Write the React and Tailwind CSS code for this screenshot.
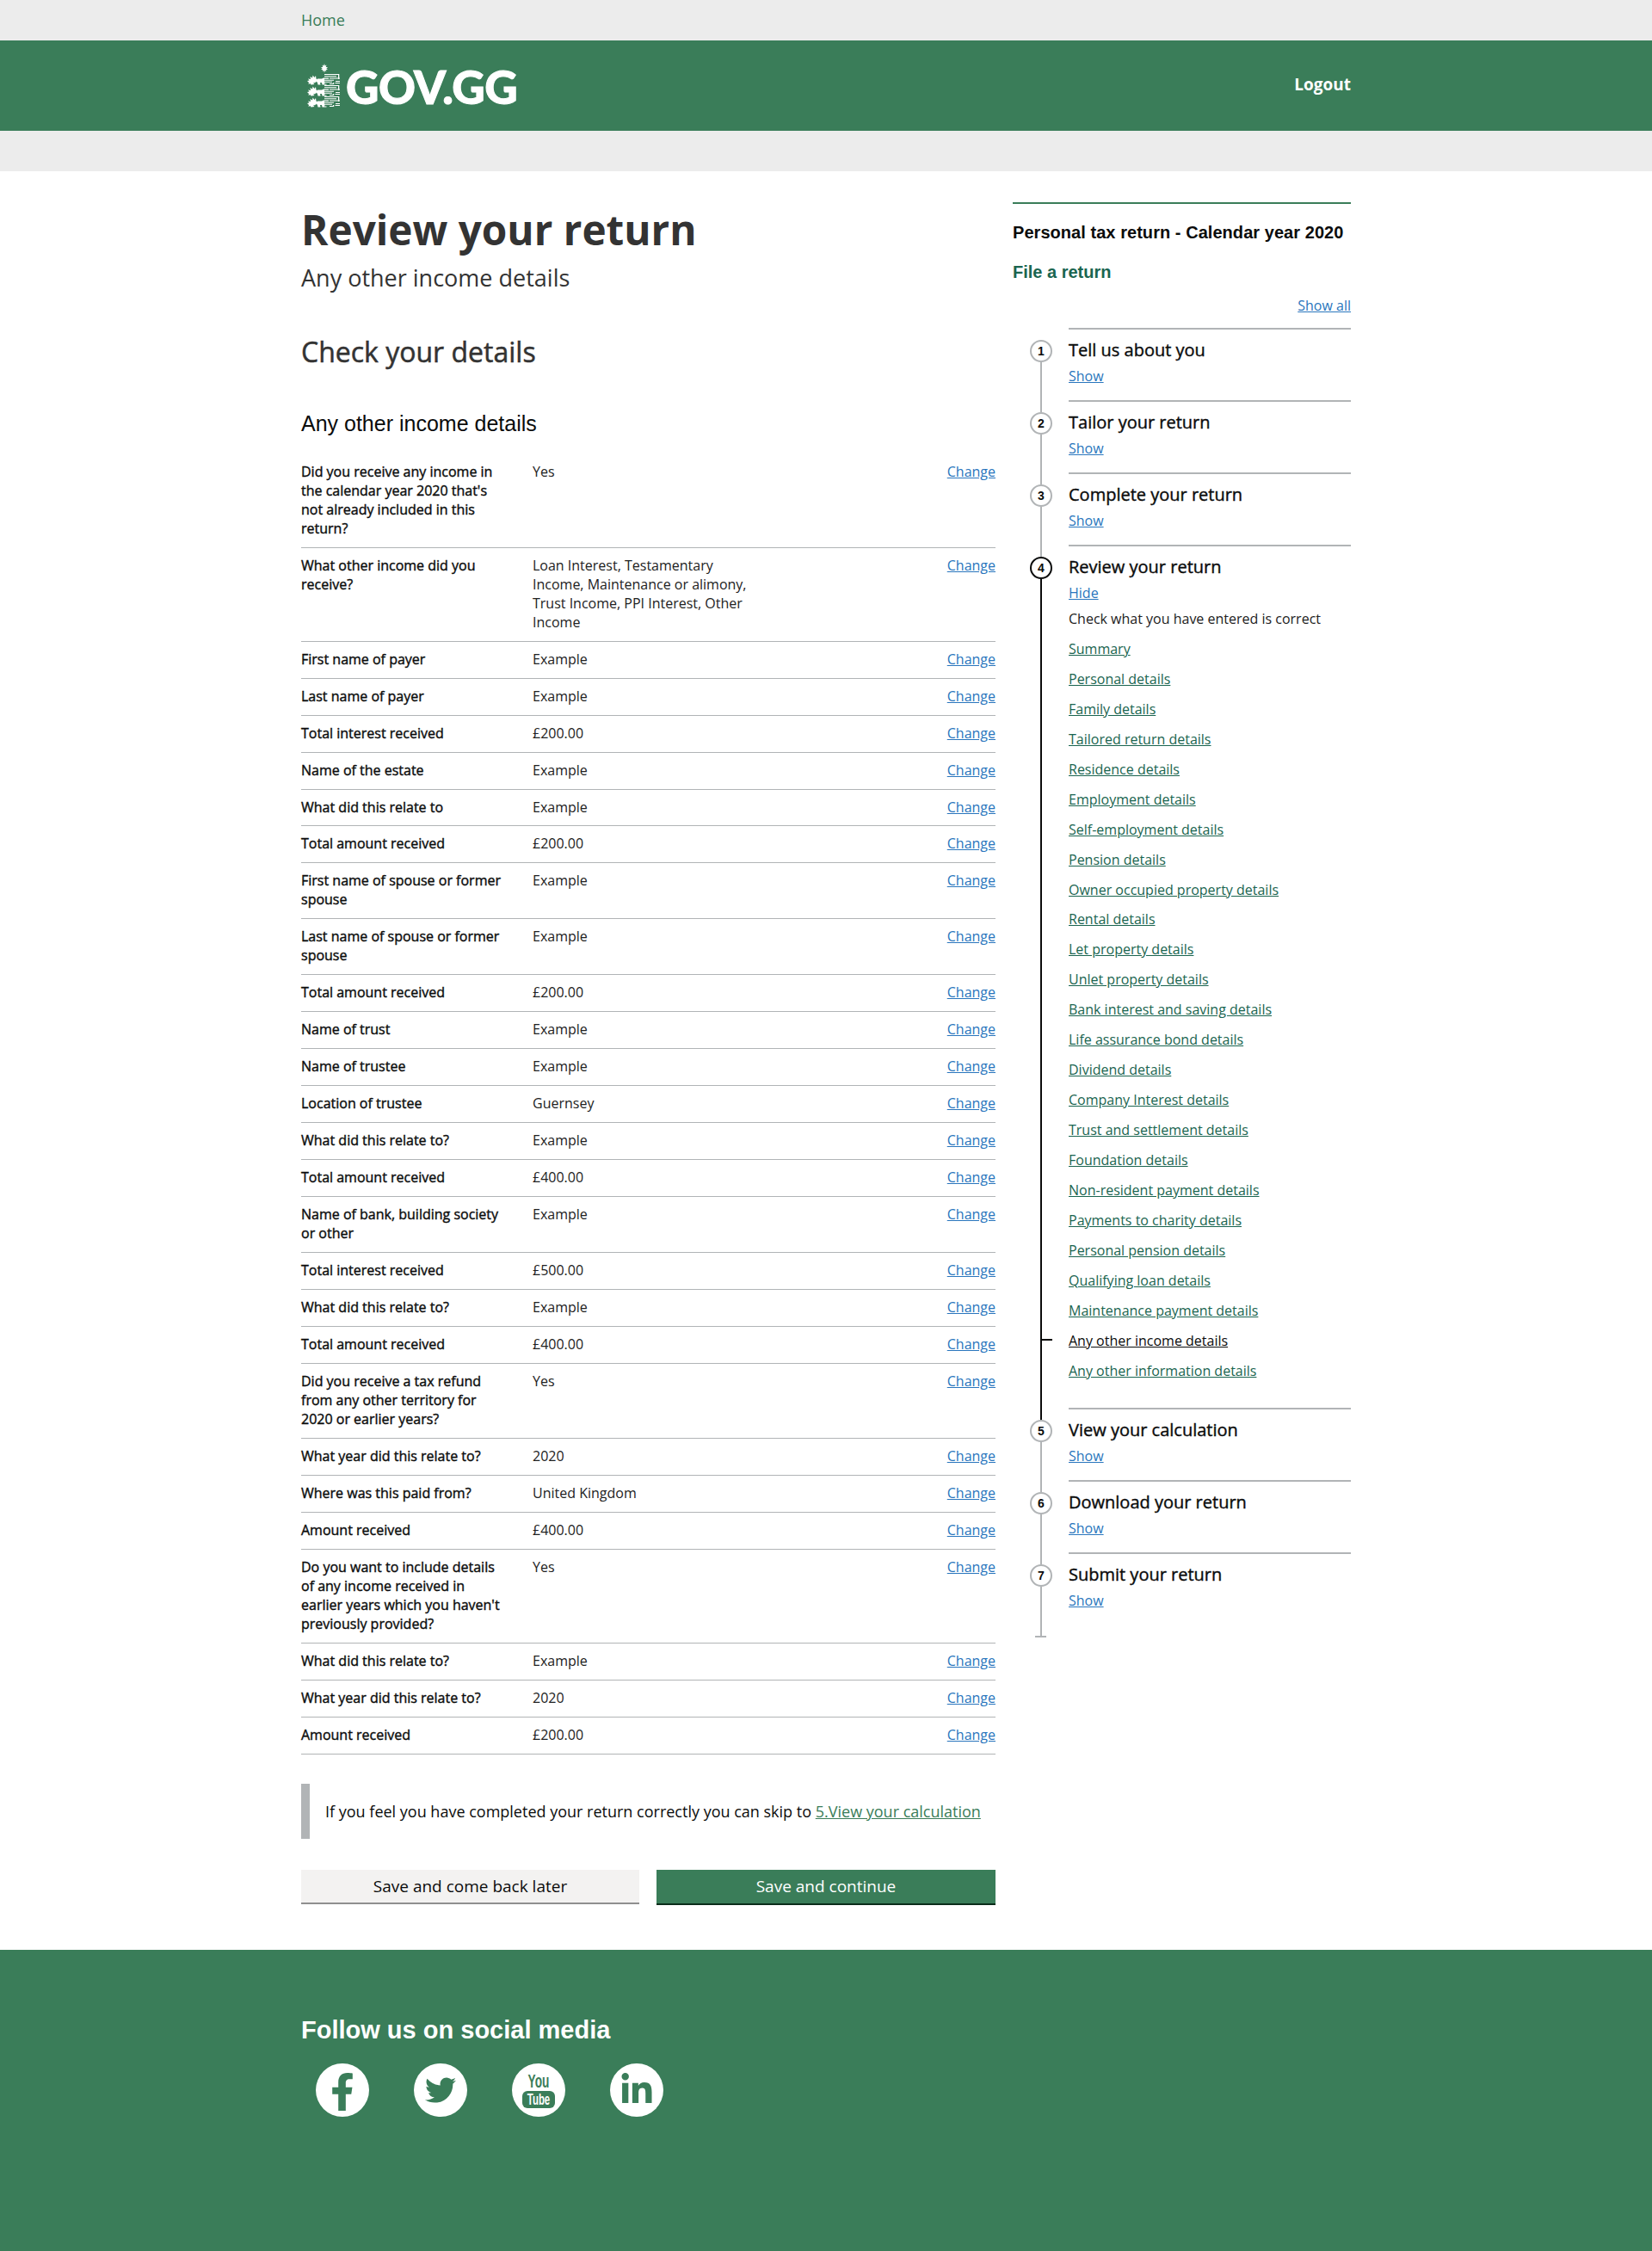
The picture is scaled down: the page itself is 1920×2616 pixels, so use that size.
import React from "react";
import { FaFacebookF, FaTwitter, FaLinkedinIn } from "react-icons/fa";

const rows = [
  ["Did you receive any income in the calendar year 2020 that's not already included in this return?", "Yes"],
  ["What other income did you receive?", "Loan Interest, Testamentary Income, Maintenance or alimony, Trust Income, PPI Interest, Other Income"],
  ["First name of payer", "Example"],
  ["Last name of payer", "Example"],
  ["Total interest received", "£200.00"],
  ["Name of the estate", "Example"],
  ["What did this relate to", "Example"],
  ["Total amount received", "£200.00"],
  ["First name of spouse or former spouse", "Example"],
  ["Last name of spouse or former spouse", "Example"],
  ["Total amount received", "£200.00"],
  ["Name of trust", "Example"],
  ["Name of trustee", "Example"],
  ["Location of trustee", "Guernsey"],
  ["What did this relate to?", "Example"],
  ["Total amount received", "£400.00"],
  ["Name of bank, building society or other", "Example"],
  ["Total interest received", "£500.00"],
  ["What did this relate to?", "Example"],
  ["Total amount received", "£400.00"],
  ["Did you receive a tax refund from any other territory for 2020 or earlier years?", "Yes"],
  ["What year did this relate to?", "2020"],
  ["Where was this paid from?", "United Kingdom"],
  ["Amount received", "£400.00"],
  ["Do you want to include details of any income received in earlier years which you haven't previously provided?", "Yes"],
  ["What did this relate to?", "Example"],
  ["What year did this relate to?", "2020"],
  ["Amount received", "£200.00"],
];

const reviewLinks = [
  "Summary",
  "Personal details",
  "Family details",
  "Tailored return details",
  "Residence details",
  "Employment details",
  "Self-employment details",
  "Pension details",
  "Owner occupied property details",
  "Rental details",
  "Let property details",
  "Unlet property details",
  "Bank interest and saving details",
  "Life assurance bond details",
  "Dividend details",
  "Company Interest details",
  "Trust and settlement details",
  "Foundation details",
  "Non-resident payment details",
  "Payments to charity details",
  "Personal pension details",
  "Qualifying loan details",
  "Maintenance payment details",
  "Any other income details",
  "Any other information details",
];

const Lion = ({ y }) => (
  <g transform={`translate(0 ${y})`} fill="#fff">
    {/* head and mane */}
    <path d="M0 8l2.500-.5-1.500-2 3 .5-.5-3 2.500 1.500.5-3 2 2.500 1.500-2 .5 3.500 2 1.500-2 1-1 2-2.500.5 1.500 1.500-4 .5-1-1.500-2 1 .5-2z" />
    {/* body */}
    <path d="M12 5.500h5l2-1h6v1.200h-5v1h11v1.100H20v.9h9v1.100h-8.500l-.5 1.600h2.500v1h-5l-.5-2.500h-2l.5 2.500h-3l-.7-3-2-.4z" />
    {/* tail and hind legs */}
    <path d="M20 0h17v1h-17zM20 2.200h14v1h-14zM36 0h1.300v6H36zM26 4.500h12v1H26zM33 8h5v1h-5zM30 10h1.200v2h-1.200zM32.500 10h5.500v1h-5.500zM26 11h5v1h-5z" />
  </g>
);

const LogoCrest = () => (
  <svg width="40" height="52" viewBox="0 0 40 52" className="shrink-0">
    <path
      d="M20 0l.8 2.500 1.700-1-.8 2.500 2.300 0-1.700 1.700 1.700 1-2.300.5.800 1.800-1.700-1-.8 2.500-.8-2.500-1.700 1 .8-1.800-2.300-.5 1.700-1-1.700-1.700 2.300 0-.8-2.500 1.700 1z"
      fill="#fff"
    />
    <Lion y={12} />
    <Lion y={25} />
    <Lion y={38} />
  </svg>
);

const Row = ({ label, value }) => (
  <div className="flex border-b border-[#b1b4b6] py-[10px] text-base leading-[21.97px]">
    <div className="w-[242px] shrink-0 text-[#0b0c0c] [-webkit-text-stroke:0.4px]">{label}</div>
    <div className="ml-[27px] w-[260px] text-[#222]">{value}</div>
    <a href="#" className="ml-auto text-[#2a76bd] underline">
      Change
    </a>
  </div>
);

const Step = ({ num, title, active, last, children }) => {
  const ring = active ? "border-[#0b0c0c]" : "border-[#b1b4b6]";
  return (
    <div className="relative pl-[65px]">
      <div className="border-t-2 border-[#b1b4b6] pt-[10px]">
        <h3 className="text-xl leading-7 font-normal text-[#0b0c0c] [-webkit-text-stroke:0.4px]">{title}</h3>
        {children}
      </div>
      {/* timeline */}
      {last ? (
        <>
          <div className="absolute top-[40px] left-[32px] h-[58px] w-[2px] bg-[#b1b4b6]" />
          <div className="absolute top-[97px] left-[26px] h-[2px] w-[13px] bg-[#b1b4b6]" />
        </>
      ) : (
        <div
          className={`absolute top-[40px] -bottom-[14px] left-[32px] w-[2px] ${active ? "bg-[#0b0c0c]" : "bg-[#b1b4b6]"}`}
        />
      )}
      <div
        className={`absolute top-[14px] left-[20px] flex h-[26px] w-[26px] items-center justify-center rounded-full border-2 bg-white font-['Liberation_Sans',sans-serif] text-sm font-bold text-[#0b0c0c] ${ring}`}
      >
        {num}
      </div>
    </div>
  );
};

const ShowLink = () => (
  <div className="mt-[5px] pb-[17px] leading-[22px]">
    <a href="#" className="text-[#2a76bd] underline">
      Show
    </a>
  </div>
);

const SocialCircle = ({ children }) => (
  <div className="flex h-[62px] w-[62px] items-center justify-center rounded-full bg-white text-[#3a7d59]">
    {children}
  </div>
);

export default function App() {
  return (
    <div className="min-h-[2616px] bg-white font-['Open_Sans',sans-serif] text-[#0b0c0c]">
      <div className="h-[47px] bg-[#ececec]">
        <div className="mx-auto w-[1220px] pt-[10px] text-lg leading-[26px] text-[#3a7d59]">Home</div>
      </div>

      <header className="h-[105px] bg-[#3a7d59]">
        <div className="mx-auto flex h-full w-[1220px] items-center justify-between">
          <div className="flex items-center pl-[7px]">
            <LogoCrest />
            <span className="mt-[2px] ml-[5px] font-['Lato',sans-serif] text-[53px] leading-[60px] font-black tracking-[-0.5px] text-white [-webkit-text-stroke:1px]">
              GOV.GG
            </span>
          </div>
          <a href="#" className="-mt-[2px] text-[19px] font-bold text-white">
            Logout
          </a>
        </div>
      </header>
      <div className="h-[47px] bg-[#ececec]" />

      <div className="mx-auto flex w-[1220px] justify-between">
        <main className="w-[807px] pb-[52px]">
          <h1 className="mt-[40px] text-[47.7px] leading-[56px] font-bold text-[#333]">Review your return</h1>
          <p className="mt-3 text-[27px] leading-8 text-[#333]">Any other income details</p>
          <h2 className="mt-[50px] text-[32px] leading-10 font-normal text-[#333] [-webkit-text-stroke:0.5px]">
            Check your details
          </h2>
          <h3 className="mt-[48px] font-['Liberation_Sans',sans-serif] text-[25px] leading-[30px] text-[#0b0c0c]">
            Any other income details
          </h3>

          <div className="mt-[20.9px]">
            {rows.map((r, i) => (
              <Row key={i} label={r[0]} value={r[1]} />
            ))}
          </div>

          <div className="mt-[34.6px] flex h-16 items-center border-l-[10px] border-[#b1b4b6] pl-[18px] text-lg text-[#0b0c0c]">
            <p>
              If you feel you have completed your return correctly you can skip to{" "}
              <a href="#" className="text-[#3a7d59] underline">
                5.View your calculation
              </a>
            </p>
          </div>

          <div className="mt-9 flex justify-between">
            <button className="h-10 w-[393px] border-b-2 border-[#8f8f8f] bg-[#f3f2f1] text-[19px] text-[#0b0c0c]">
              Save and come back later
            </button>
            <button className="h-[41px] w-[394px] border-b-2 border-[#0b2d1a] bg-[#3a7d59] text-[19px] text-white">
              Save and continue
            </button>
          </div>
        </main>

        <aside className="w-[393px] pt-[36px]">
          <div className="border-t-2 border-[#3a7d59] pt-[19px] font-['Liberation_Sans',sans-serif]">
            <p className="text-xl leading-7 font-bold tracking-[0.05px] text-[#0b0c0c]">
              Personal tax return - Calendar year 2020
            </p>
            <p className="mt-[18px] text-xl leading-7 font-bold text-[#1a6550]">File a return</p>
          </div>
          <div className="mt-[14px] mb-[15px] text-right leading-[22px]">
            <a href="#" className="text-[#2a76bd] underline">
              Show all
            </a>
          </div>

          <Step num={1} title="Tell us about you">
            <ShowLink />
          </Step>
          <Step num={2} title="Tailor your return">
            <ShowLink />
          </Step>
          <Step num={3} title="Complete your return">
            <ShowLink />
          </Step>
          <Step num={4} title="Review your return" active>
            <div className="mt-[5px] leading-[22px]">
              <a href="#" className="text-[#2a76bd] underline">
                Hide
              </a>
            </div>
            <p className="mt-2 leading-[22px] text-[#222]">Check what you have entered is correct</p>
            <ul className="mt-[13px] flex flex-col gap-[12.95px] pb-[32px] leading-[22px]">
              {reviewLinks.map((l) => {
                const current = l === "Any other income details";
                return (
                  <li key={l} className="relative">
                    {current && <div className="absolute top-[9px] -left-[32px] h-[2px] w-[13px] bg-[#0b0c0c]" />}
                    <a href="#" className={`underline ${current ? "text-[#0b0c0c]" : "text-[#1a6550]"}`}>
                      {l}
                    </a>
                  </li>
                );
              })}
            </ul>
          </Step>
          <Step num={5} title="View your calculation">
            <ShowLink />
          </Step>
          <Step num={6} title="Download your return">
            <ShowLink />
          </Step>
          <Step num={7} title="Submit your return" last>
            <ShowLink />
          </Step>
        </aside>
      </div>

      <footer className="h-[350px] bg-[#3a7d59]">
        <div className="mx-auto w-[1220px] pt-[75px]">
          <h2 className="font-['Liberation_Sans',sans-serif] text-[29px] leading-9 font-bold text-white">
            Follow us on social media
          </h2>
          <div className="mt-[21px] ml-[17px] flex gap-[52px]">
            <SocialCircle>
              <FaFacebookF size={44} className="mt-1" />
            </SocialCircle>
            <SocialCircle>
              <FaTwitter size={36} />
            </SocialCircle>
            <SocialCircle>
              <div className="flex flex-col items-center font-['Liberation_Sans',sans-serif] font-bold">
                <span className="scale-x-[0.62] text-[22px] leading-[19px]">You</span>
                <span className="mt-[2px] flex h-5 w-[38px] items-center justify-center rounded-md bg-[#3a7d59] text-white">
                  <span className="shrink-0 scale-x-[0.6] text-[19px] leading-5">Tube</span>
                </span>
              </div>
            </SocialCircle>
            <SocialCircle>
              <FaLinkedinIn size={40} />
            </SocialCircle>
          </div>
        </div>
      </footer>
    </div>
  );
}
